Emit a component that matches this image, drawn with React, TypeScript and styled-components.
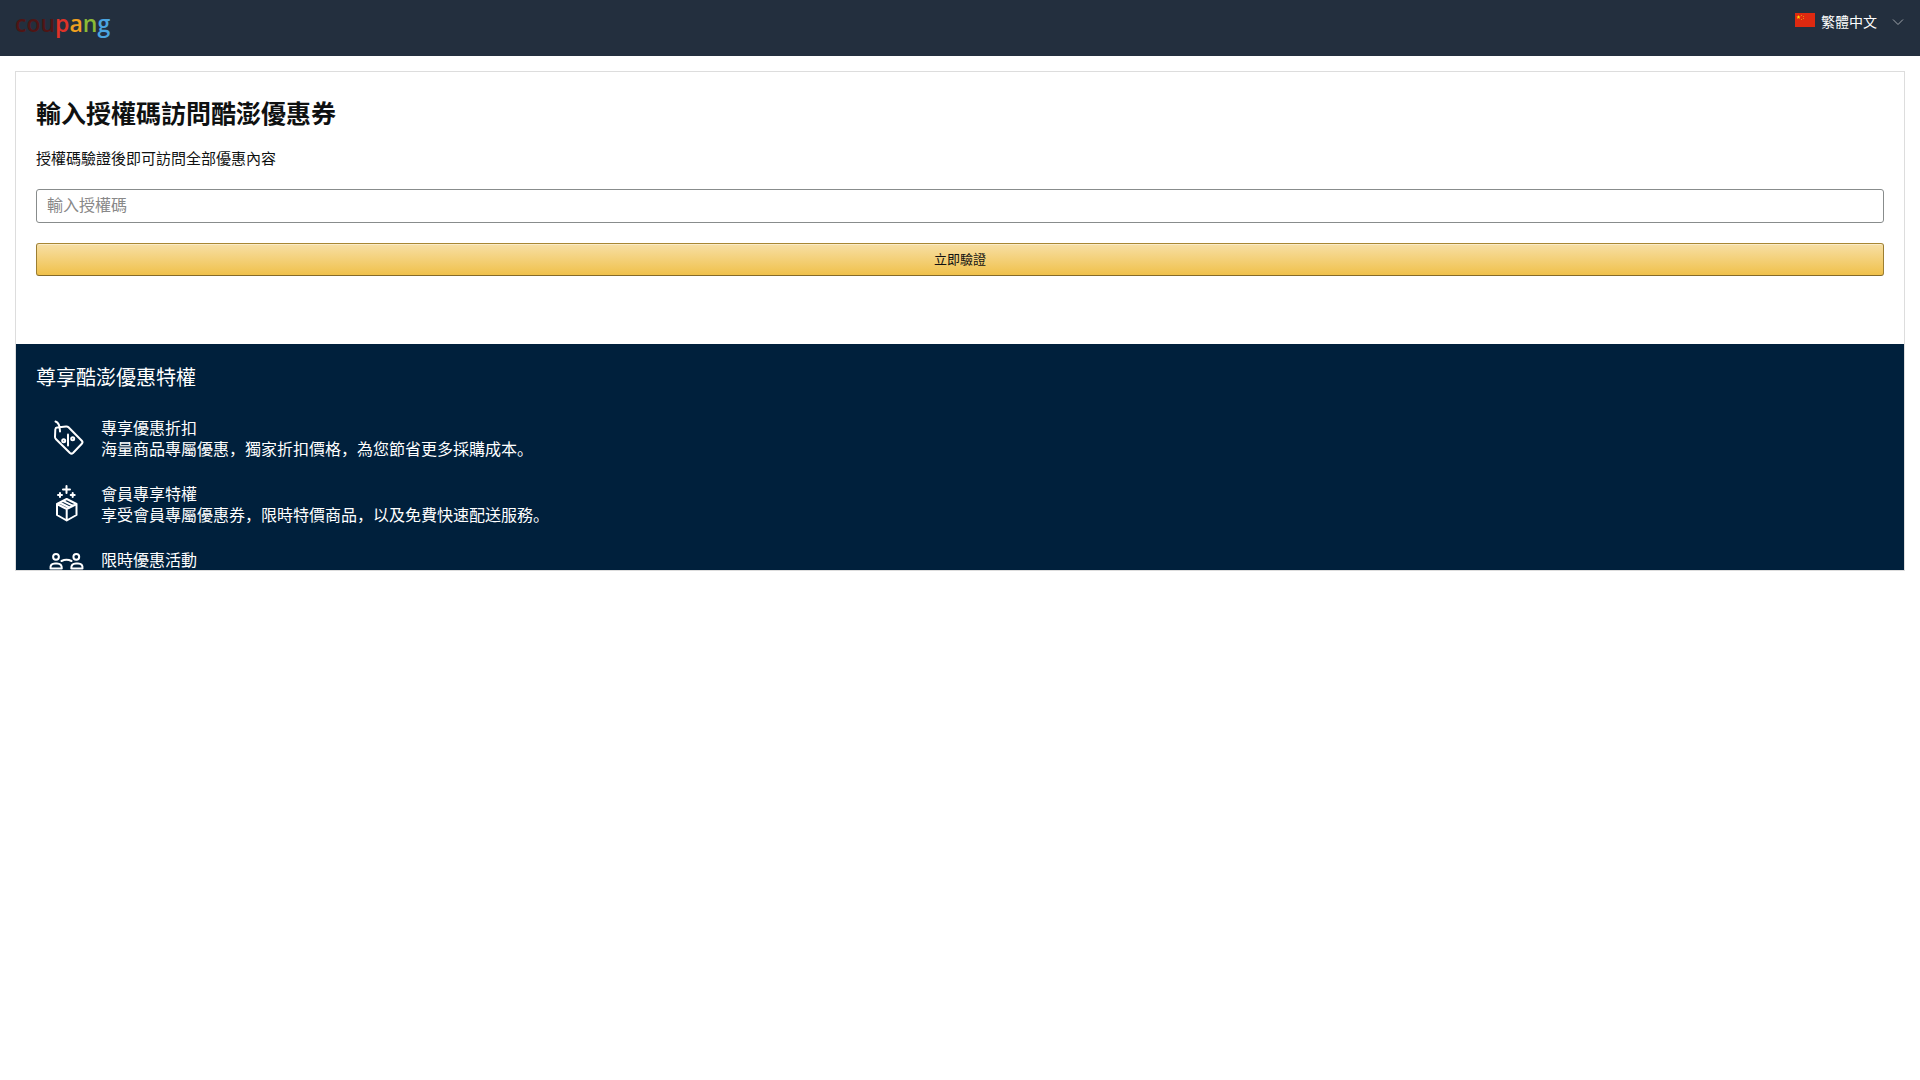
import React from "react";
import styled, { createGlobalStyle } from "styled-components";

const Base = createGlobalStyle`
  * { box-sizing: border-box; }
  body {
    margin: 0;
    background: #fff;
    color: #0f1111;
    font-family: "Liberation Sans", "Noto Sans CJK SC", sans-serif;
  }
  button, input, select { font-family: inherit; }
`;

const Header = styled.header`
  display: flex;
  justify-content: space-between;
  align-items: flex-start;
  height: 56px;
  padding: 0 15px;
  background: #232f3e;
`;

const Logo = styled.a`
  padding-top: 7px;
  font-family: "Open Sans", sans-serif;
  font-size: 23px;
  font-weight: 600;
  line-height: 32px;
  text-decoration: none;
`;

const Letters = styled.span<{ $color: string }>`
  color: ${(p) => p.$color};
`;

const Language = styled.label`
  display: flex;
  align-items: center;
  gap: 6px;
  padding-top: 8px;
`;

const Flag = styled.svg`
  width: 20px;
  height: 14px;
  margin-bottom: 4px;
`;

const LanguageSelect = styled.select`
  appearance: none;
  width: 70px;
  height: 28px;
  padding: 0;
  border: 0;
  background: transparent;
  color: #fff;
  font-size: 14px;
`;

const Chevron = styled.svg`
  width: 14px;
  height: 10px;
  margin-left: -6px;
  pointer-events: none;
`;

const Card = styled.main`
  max-height: 500px;
  margin: 15px;
  overflow: hidden;
  border: 1px solid #ddd;
`;

const Form = styled.form`
  display: flex;
  flex-direction: column;
  padding: 20px 20px 68px;
`;

const Title = styled.h1`
  margin: 0 0 14px;
  font-size: 25px;
  font-weight: 700;
  line-height: 44px;
`;

const Hint = styled.label`
  margin-bottom: 21px;
  font-size: 15px;
  line-height: 18px;
`;

const CodeInput = styled.input`
  height: 34px;
  margin-bottom: 20px;
  padding: 0 10px;
  border: 1px solid #888c8c;
  border-radius: 3px;
  font-size: 16px;
  &::placeholder { color: #888; }
`;

const Submit = styled.button`
  height: 33px;
  padding: 0 0 2px;
  border: 1px solid;
  border-color: #a88734 #9c7e31 #846a29;
  border-radius: 3px;
  background: linear-gradient(#f7dfa5, #f0c14b);
  box-shadow: inset 0 1px 0 rgba(255, 255, 255, 0.4);
  color: #111;
  font-size: 13px;
`;

const Benefits = styled.section`
  padding: 20px;
  background: #00203c;
  color: #fff;
`;

const BenefitsTitle = styled.h2`
  margin: 0 0 26px;
  font-size: 20px;
  font-weight: 400;
  line-height: 28px;
`;

const List = styled.ul`
  display: flex;
  flex-direction: column;
  gap: 24px;
  margin: 0;
  padding: 0;
  list-style: none;
`;

const Item = styled.li`
  display: flex;
  gap: 15px;
  padding-left: 10px;
  font-size: 16px;
  line-height: 21px;
`;

const Icon = styled.svg`
  width: 40px;
  height: 40px;
  fill: none;
  stroke: #fff;
  stroke-width: 2;
  stroke-linecap: round;
  stroke-linejoin: round;
`;

const Line = styled.p`
  margin: 0;
`;

const TagIcon = () => (
  <Icon viewBox="0 -1 40 40">
    <path d="M9.500 2.500 Q14 4 14 12.500 M11 8.500 L20 7.500 Q21.500 7.300 22.500 8.300 L35.800 21.800 Q37.200 23.300 35.800 24.800 L27 34 Q25.500 35.300 24 34 L9.800 20 Q9 19 9 18 L9.300 10.500 Q9.500 8.700 11 8.500 Z" />
    <path d="M22 15.500 V26.500" />
    <circle cx="17.700" cy="21.700" r="1.500" />
    <circle cx="26.700" cy="19.700" r="1.500" />
  </Icon>
);

const BoxIcon = () => (
  <Icon viewBox="0 -1 40 40">
    <path d="M20.500 1 V8 M17 4.500 H24 M14 8 V12 M12 10 H16 M26.700 8 V12 M24.700 10 H28.700" />
    <path d="M20.700 14 L30.500 19 V30 L20.700 35.500 L11 30 V19 Z M11 19 L20.700 24 L30.500 19 M20.700 24 V35.500 M13.500 17.500 L23.500 22.500 M17 15.800 L27 20.800" />
  </Icon>
);

const PeopleIcon = () => (
  <Icon viewBox="0 -2 40 40">
    <circle cx="10" cy="4.800" r="2.900" />
    <circle cx="30.300" cy="4.800" r="2.900" />
    <path d="M15.500 9 Q20.500 6.300 25.500 9" />
    <path d="M4.500 16.500 Q4 11.500 9 11.500 H11 Q16 11.500 15.800 16.500 Z M25.300 16.500 Q25 11.500 30 11.500 H32 Q37 11.500 36.500 16.500 Z" />
  </Icon>
);

const logo = [
  { text: "cou", color: "#4f1515" },
  { text: "p", color: "#e03227" },
  { text: "a", color: "#f0a020" },
  { text: "n", color: "#8bbb36" },
  { text: "g", color: "#4aa5e0" },
];

const benefits = [
  { icon: <TagIcon />, title: "專享優惠折扣", text: "海量商品專屬優惠，獨家折扣價格，為您節省更多採購成本。" },
  { icon: <BoxIcon />, title: "會員專享特權", text: "享受會員專屬優惠券，限時特價商品，以及免費快速配送服務。" },
  { icon: <PeopleIcon />, title: "限時優惠活動", text: "" },
];

export default function App() {
  return (
    <>
      <Base />
      <Header>
        <Logo href="#">
          {logo.map((part) => (
            <Letters key={part.text} $color={part.color}>{part.text}</Letters>
          ))}
        </Logo>
        <Language>
          <Flag viewBox="0 0 20 14">
            <path fill="#de2910" d="M0 0h20v14H0z" />
            <path fill="#ffde00" d="M3.500 2l.6 1.500h1.500l-1.200 1 .5 1.500-1.400-.9-1.400.9.500-1.500-1.200-1h1.500z" />
            <path fill="#e88a10" d="M6 2h1v1H6zM8 3h1v1H8zM8 5h1v1H8zM6 6h1v1H6z" />
          </Flag>
          <LanguageSelect aria-label="語言">
            <option>繁體中文</option>
          </LanguageSelect>
          <Chevron viewBox="0 0 14 10" fill="none" stroke="#a0a5ab">
            <path d="M2 2.500 L7 7.500 L12 2.500" />
          </Chevron>
        </Language>
      </Header>
      <Card>
        <Form onSubmit={(e) => e.preventDefault()}>
          <Title>輸入授權碼訪問酷澎優惠券</Title>
          <Hint htmlFor="code">授權碼驗證後即可訪問全部優惠內容</Hint>
          <CodeInput id="code" placeholder="輸入授權碼" />
          <Submit type="submit">立即驗證</Submit>
        </Form>
        <Benefits>
          <BenefitsTitle>尊享酷澎優惠特權</BenefitsTitle>
          <List>
            {benefits.map((b) => (
              <Item key={b.title}>
                {b.icon}
                <div>
                  <Line>{b.title}</Line>
                  <Line>{b.text}</Line>
                </div>
              </Item>
            ))}
          </List>
        </Benefits>
      </Card>
    </>
  );
}
